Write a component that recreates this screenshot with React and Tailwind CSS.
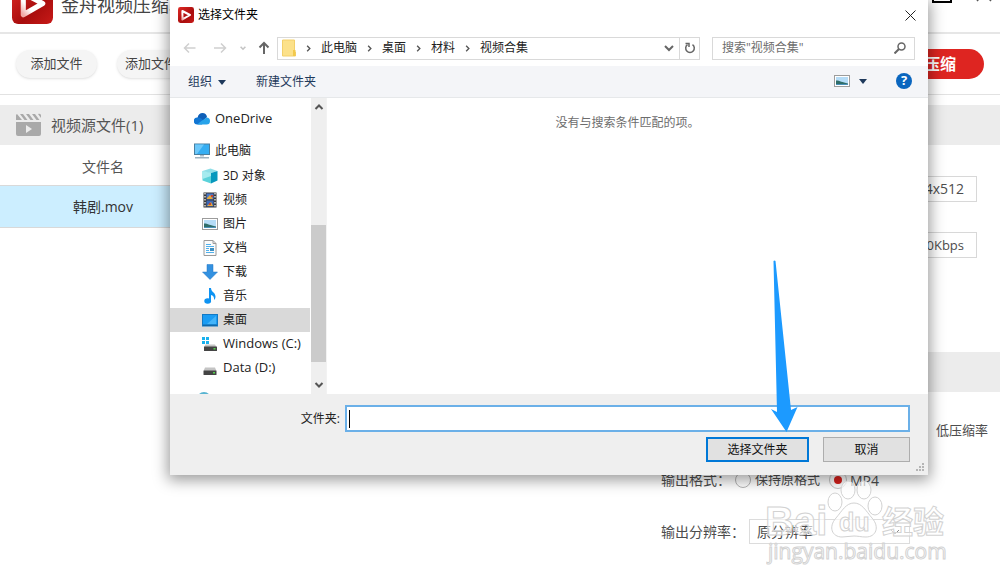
import { useState } from 'react';

const crumbs = ['此电脑', '桌面', '材料', '视频合集'];

const folders = [
  { name: '3D 对象', icon: CubeIcon },
  { name: '视频', icon: FilmIcon },
  { name: '图片', icon: PictureIcon },
  { name: '文档', icon: DocIcon },
  { name: '下载', icon: DownloadIcon },
  { name: '音乐', icon: MusicIcon },
  { name: '桌面', icon: DesktopIcon },
  { name: 'Windows (C:)', icon: WinDriveIcon, latin: true },
  { name: 'Data (D:)', icon: DriveIcon, latin: true },
];

function LogoIcon({ className }) {
  return (
    <svg viewBox="0 0 40 40" className={className}>
      <defs>
        <linearGradient id="logo" x1="0" y1="0" x2="1" y2="1">
          <stop offset="0" stopColor="#e02a26" />
          <stop offset="0.6" stopColor="#a80d0d" />
          <stop offset="1" stopColor="#c81a18" />
        </linearGradient>
        <linearGradient id="play" x1="0" y1="1" x2="0.6" y2="0.4">
          <stop offset="0" stopColor="#f0a9a6" />
          <stop offset="0.5" stopColor="#ffffff" />
        </linearGradient>
      </defs>
      <rect width="40" height="40" rx="6" fill="url(#logo)" />
      <path
        d="M11 10l19 10-19 11z"
        fill="none"
        stroke="url(#play)"
        strokeWidth="5"
        strokeLinejoin="round"
      />
    </svg>
  );
}

function ClapperIcon() {
  return (
    <svg viewBox="0 0 25 24" className="h-6 w-[25px]" fill="#a9a9a9">
      <path d="M0 7V3a2 2 0 0 1 1-2l5 6zM4 1h3l4.500 6h-3zM10 1h3l4.500 6h-3zM16 1h3l4.500 6h-3zM22 1a2 2 0 0 1 3 2v2z" />
      <path
        fillRule="evenodd"
        d="M0 9h25v12a2 2 0 0 1-2 2H2a2 2 0 0 1-2-2zM10 12v8l6-4z"
      />
    </svg>
  );
}

function CloudIcon() {
  return (
    <svg viewBox="0 0 16 16" className="h-4 w-4 shrink-0">
      <path d="M3.500 7C4 3.500 6 2 8.500 2s4 1.500 4.500 4l-5 5z" fill="#0f5fb8" />
      <path d="M3.500 13.500A3.400 3.400 0 0 1 3 6.600c3-.6 5 1.400 7 3.400l-2 3.500z" fill="#1276d3" />
      <path d="M12.500 6.500a3.500 3.500 0 0 1 0 7h-9C5 11 9.500 9 12.500 6.500z" fill="#27a3ea" />
    </svg>
  );
}

function ComputerIcon() {
  return (
    <svg viewBox="0 0 16 16" className="h-4 w-4 shrink-0">
      <rect x="0.500" y="1" width="15" height="10.500" fill="#35aef3" stroke="#4a7f9f" />
      <path d="M1 1.500h9l-7 9.500H1z" fill="#6cc8fa" />
      <path d="M6 12h4v1.500H6z" fill="#a9bcc9" />
      <path d="M1 14h14v1.500H1z" fill="#9db2c0" />
    </svg>
  );
}

function CubeIcon() {
  return (
    <svg viewBox="0 0 16 16" className="h-4 w-4 shrink-0">
      <path d="M0.500 3L8.500 0.500 15.500 3 9 5z" fill="#8fdfe8" />
      <path d="M0.500 3L9 5v10.500l-8.500-3z" fill="#5bd2da" />
      <path d="M9 5l6.500-2v9.500L9 15.500z" fill="#0798bd" />
      <path d="M0.500 3L9 5v3L0.500 11z" fill="#a5ebef" />
    </svg>
  );
}

function FilmIcon() {
  return (
    <svg viewBox="0 0 16 16" className="h-4 w-4 shrink-0">
      <rect x="1.500" y="0.500" width="13" height="15" fill="#393939" />
      <path d="M3 1v14M13 1v14" stroke="#d8d8d8" strokeWidth="1.500" strokeDasharray="1.500 1.500" />
      <rect x="4.500" y="1.500" width="7" height="6" fill="#4977c9" />
      <rect x="4.500" y="8.500" width="7" height="6" fill="#3d66b3" />
      <path d="M5 6l3-3 3 4H5zM5 14l4-4 2 4z" fill="#e5a93a" />
      <path d="M9 3h2v2H9zM7 11h2v2H7z" fill="#c9442e" />
    </svg>
  );
}

function PictureIcon() {
  return (
    <svg viewBox="0 0 16 16" className="h-4 w-4 shrink-0">
      <rect x="0.500" y="2.500" width="15" height="11" fill="#fff" stroke="#9c9c9c" />
      <rect x="2" y="4" width="12" height="8" fill="#b5dcf7" />
      <path d="M2 7.500c4 0 6 2 12 3V12H2z" fill="#2f6d6a" />
      <path d="M2 11h12v1H2z" fill="#4a90b8" />
    </svg>
  );
}

function DocIcon() {
  return (
    <svg viewBox="0 0 16 16" className="h-4 w-4 shrink-0">
      <path d="M2 0.500h9l3 3v12H2z" fill="#fbfbfb" stroke="#9a9a9a" />
      <path d="M11 0.500v3h3" fill="none" stroke="#9a9a9a" />
      <path d="M4 4.500h5M4 6.500h8M4 8.500h3M4 10.500h3M4 12.500h8" stroke="#4fb0ec" />
      <path d="M8 8h4v3H8z" fill="#3d8fc2" />
    </svg>
  );
}

function DownloadIcon() {
  return (
    <svg viewBox="0 0 16 16" className="h-4 w-4 shrink-0">
      <path d="M5 0.500h6v7.500h4.500L8 15.500 0.500 8H5z" fill="#3391e0" stroke="#2277c4" strokeWidth="0.500" />
    </svg>
  );
}

function MusicIcon() {
  return (
    <svg viewBox="0 0 16 16" className="h-4 w-4 shrink-0" fill="#0e93f2">
      <path d="M7 0h2c0 4 4.500 4.500 4.500 8.500 0 1.500-.5 2.500-1.500 3.500.5-3-1-4.500-3-5z" />
      <path d="M7 0h2v13H7z" />
      <ellipse cx="5.700" cy="13" rx="3.400" ry="2.700" />
    </svg>
  );
}

function DesktopIcon() {
  return (
    <svg viewBox="0 0 16 16" className="h-4 w-4 shrink-0">
      <rect x="0.500" y="2.500" width="15" height="11.500" fill="#1a9cf3" stroke="#1379c4" />
      <path d="M14 4L5 12h9z" fill="#44b4f9" />
      <path d="M1 12.500h14V14H1z" fill="#1268a8" />
    </svg>
  );
}

function DriveIcon() {
  return (
    <svg viewBox="0 0 16 16" className="h-4 w-4 shrink-0">
      <path d="M3 7.500h10l1.500 3.500h-13z" fill="#c4c4c4" />
      <rect x="1.500" y="10.500" width="13" height="4.500" rx="0.500" fill="#444" />
      <rect x="11" y="12" width="2" height="1.500" fill="#53d34b" />
    </svg>
  );
}

function WinDriveIcon() {
  return (
    <svg viewBox="0 0 16 16" className="h-4 w-4 shrink-0">
      <path d="M0 1h3v3H0zM4 1h3v3H4zM0 5h3v3H0zM4 5h3v3H4z" fill="#19b1ee" />
      <path d="M3.500 8.500H13l1.500 2.500H2z" fill="#c4c4c4" />
      <rect x="2" y="10.500" width="13" height="4.500" rx="0.500" fill="#444" />
      <rect x="11.500" y="12" width="2" height="1.500" fill="#53d34b" />
    </svg>
  );
}

function FolderIcon() {
  return (
    <svg viewBox="0 0 14 18" className="h-[18px] w-[14px] shrink-0">
      <path d="M0.500 1h12v12h1v4H0.500z" fill="#fce18a" stroke="#f3d06b" />
      <path d="M11 11h2.500v6H11z" fill="#f2c94c" />
    </svg>
  );
}

function Chevron({ d, className }) {
  return (
    <svg viewBox="0 0 10 10" className={className} fill="none" stroke="currentColor">
      <path d={d} />
    </svg>
  );
}

function NavArrow({ d, className }) {
  return (
    <svg viewBox="0 0 14 14" className={className} fill="none" stroke="currentColor">
      <path d={d} />
    </svg>
  );
}

function AppHeader() {
  return (
    <header className="flex h-[34px] items-end overflow-hidden border-b-2 border-[#e6e6e6] pr-2 pl-3">
      <LogoIcon className="mb-2 h-[41px] w-[41px] shrink-0" />
      <h1 className="mb-[15px] ml-2 text-[18px] leading-6 text-[#444]">金舟视频压缩软件</h1>
      <div className="mb-[29px] ml-auto flex items-end gap-6">
        <button aria-label="最大化" className="h-4 w-5 border-2 border-black" />
        <button aria-label="关闭" className="mb-px text-[#555]">
          <svg viewBox="0 0 16 16" className="h-4 w-4" fill="none" stroke="currentColor" strokeWidth="1.500">
            <path d="M1 0l14 15M15 0L1 15" />
          </svg>
        </button>
      </div>
    </header>
  );
}

function AppToolbar() {
  return (
    <div className="flex h-[61px] items-center gap-5 border-b border-[#e2e2e2] px-4">
      <button className="h-7 w-[81px] rounded-full bg-[#f5f5f5] pb-px text-[13px] text-[#444] shadow-sm">
        添加文件
      </button>
      <button className="h-7 w-[81px] rounded-full bg-[#f5f5f5] pb-px text-[13px] text-[#444] shadow-sm">
        添加文件夹
      </button>
      <button className="ml-auto h-[30px] w-[120px] rounded-full bg-[#de2521] text-[16px] font-bold text-white">
        开始压缩
      </button>
    </div>
  );
}

function SourceList() {
  return (
    <section className="min-w-0 flex-1">
      <div className="flex h-10 items-center gap-[10px] bg-[#ececec] px-4">
        <ClapperIcon />
        <h2 className="text-[15px] text-[#555]">视频源文件(1)</h2>
      </div>
      <table className="w-full table-fixed text-[14px]">
        <thead>
          <tr className="h-10 text-[#555]">
            <th className="w-[206px] pt-[3px] font-normal">文件名</th>
            <th />
          </tr>
        </thead>
        <tbody>
          <tr className="h-[42px] border-y border-[#d9d9d9] bg-[#cceeff] text-[#333]">
            <td className="text-center">韩剧.mov</td>
            <td />
          </tr>
        </tbody>
      </table>
    </section>
  );
}

function Radio({ name, label, checked, onChange, className }) {
  return (
    <label className={`flex items-center ${className}`}>
      <input
        type="radio"
        name={name}
        checked={checked}
        onChange={onChange}
        className="h-4 w-4 shrink-0 appearance-none rounded-full border border-[#b5b5b5] bg-white checked:border-4 checked:border-white checked:bg-[#d8201c] checked:outline checked:outline-[#c4c4c4]"
      />
      <span>{label}</span>
    </label>
  );
}

function Settings() {
  const [format, setFormat] = useState('mp4');
  const [rate, setRate] = useState('');

  return (
    <section className="w-[360px] shrink-0 text-[#4d4d4d]">
      <div className="h-10 bg-[#ececec]" />
      <div className="flex flex-col items-end gap-[30px] pt-[31px] pr-[23px]">
        <input
          aria-label="分辨率"
          readOnly
          value="1024x512"
          className="h-[26px] w-[110px] border border-[#d8d8d8] px-3 pb-px text-right text-[14px]"
        />
        <input
          aria-label="比特率"
          readOnly
          value="1000Kbps"
          className="h-[26px] w-[110px] border border-[#d8d8d8] px-3 text-right text-[13px]"
        />
      </div>
      <div className="mt-[94px] h-10 bg-[#ececec]" />
      <div className="flex h-[78px] items-center justify-end pr-3">
        <Radio
          name="rate"
          label="低压缩率"
          className="gap-2 text-[13px]"
          checked={rate === 'low'}
          onChange={() => setRate('low')}
        />
      </div>
      <div className="flex h-5 items-center pl-[21px]">
        <span className="w-[74px] pb-px text-[14px]">输出格式：</span>
        <div className="flex gap-[10px]">
          <Radio
            name="format"
            label="保持原格式"
            className="gap-1 text-[13px]"
            checked={format === 'keep'}
            onChange={() => setFormat('keep')}
          />
          <Radio
            name="format"
            label="MP4"
            className="gap-1 text-[14px]"
            checked={format === 'mp4'}
            onChange={() => setFormat('mp4')}
          />
        </div>
      </div>
      <div className="mt-[29px] flex items-center pl-[21px]">
        <label htmlFor="resolution" className="w-[88px] pb-px text-[14px]">
          输出分辨率：
        </label>
        <div className="grid w-[161px] items-center">
          <select
            id="resolution"
            className="col-start-1 row-start-1 h-[25px] w-full appearance-none border border-[#dcdcdc] pl-[7px] text-[14px]"
          >
            <option>原分辨率</option>
          </select>
          <Chevron d="M1 3l4 4 4-4" className="col-start-1 row-start-1 mr-[10px] h-[10px] w-[10px] justify-self-end text-[#888]" />
        </div>
      </div>
    </section>
  );
}

function AddressBar() {
  return (
    <div className="flex h-9 items-center px-[13px]">
      <button aria-label="后退" className="text-[#cfcfcf]">
        <NavArrow d="M12.500 7H1.500M6 2.500L1.500 7 6 11.500" className="h-[14px] w-[14px] stroke-[1.5]" />
      </button>
      <button aria-label="前进" className="ml-4 text-[#cfcfcf]">
        <NavArrow d="M1 7h11.500M8 2.500L12.500 7 8 11.500" className="h-[14px] w-[14px] stroke-[1.5]" />
      </button>
      <button aria-label="最近" className="ml-3 text-[#c4c4c4]">
        <Chevron d="M2 3.500l3 3 3-3" className="h-2 w-2 stroke-2" />
      </button>
      <button aria-label="向上" className="ml-[10px] text-[#666]">
        <NavArrow d="M7 13V2M2.500 6.500L7 2l4.500 4.500" className="h-[14px] w-[14px] stroke-2" />
      </button>
      <div className="ml-[6px] flex h-[23px] flex-1 items-center border border-[#d9d9d9] pl-1 text-[12px] text-[#222]">
        <FolderIcon />
        {crumbs.map((name) => (
          <span key={name} className="flex items-center">
            <Chevron d="M3.500 2L6.500 5 3.500 8" className="mx-2 h-[9px] w-[9px] stroke-[1.5] text-[#555]" />
            <button className="pb-px">{name}</button>
          </span>
        ))}
        <button aria-label="展开" className="mr-[5px] ml-auto text-[#666]">
          <Chevron d="M1 3l4 4 4-4" className="h-[10px] w-[10px] stroke-2" />
        </button>
        <button aria-label="刷新" className="flex h-full w-5 items-center justify-center border-l border-[#d9d9d9] text-[#666]">
          <svg viewBox="0 0 12 12" className="h-3 w-3" fill="none" stroke="currentColor" strokeWidth="1.500">
            <path d="M8.500 2.600A4.300 4.300 0 1 1 3.500 2.600" />
            <path d="M1.500 1.500h3.500v3.500" />
          </svg>
        </button>
      </div>
      <div className="ml-3 flex h-[23px] w-[203px] items-center border border-[#d9d9d9] pr-2 pl-[9px] text-[#666]">
        <input
          type="search"
          aria-label="搜索"
          placeholder='搜索"视频合集"'
          className="min-w-0 flex-1 text-[12px] placeholder:text-[#6d6d6d]"
        />
        <svg viewBox="0 0 12 12" className="h-3 w-3" fill="none" stroke="currentColor" strokeWidth="1.500">
          <circle cx="7.500" cy="4.500" r="3.500" />
          <path d="M5 7L0.500 11.500" strokeWidth="2" />
        </svg>
      </div>
    </div>
  );
}

function CommandBar() {
  return (
    <div className="flex h-8 items-center border-b border-[#e6e8ea] bg-[#f4f5f8] pr-4 pb-px pl-[18px] text-[12px] text-[#1e395b]">
      <button className="flex items-center gap-[6px] pt-[2px]">
        组织
        <svg viewBox="0 0 8 5" className="h-[5px] w-2" fill="currentColor">
          <path d="M0 0h8L4 5z" />
        </svg>
      </button>
      <button className="ml-[30px] pt-[2px]">新建文件夹</button>
      <button aria-label="视图" className="ml-auto flex items-center gap-[9px]">
        <PictureIcon />
        <svg viewBox="0 0 8 5" className="h-[5px] w-2" fill="currentColor">
          <path d="M0 0h8L4 5z" />
        </svg>
      </button>
      <button
        aria-label="帮助"
        className="ml-[29px] flex h-4 w-4 items-center justify-center rounded-full bg-[#0a66bf] text-[13px] font-bold text-white"
      >
        ?
      </button>
    </div>
  );
}

function FolderTree() {
  return (
    <nav className="h-full w-[140px] overflow-hidden text-[12px] text-[#222]">
      <button className="mt-[9px] flex h-6 w-full items-center gap-[5px] pl-6 text-[13px]">
        <CloudIcon />
        OneDrive
      </button>
      <button className="mt-2 flex h-6 w-full items-center gap-[5px] pl-6">
        <ComputerIcon />
        此电脑
      </button>
      <ul className="mt-px">
        {folders.map(({ name, icon: Icon, latin }) => (
          <li key={name}>
            <button
              className={`flex h-6 w-full items-center gap-[5px] pl-8 whitespace-nowrap ${
                name === '桌面' ? 'bg-[#d9d9d9]' : ''
              } ${latin ? 'text-[13px]' : ''}`}
            >
              <Icon />
              {name}
            </button>
          </li>
        ))}
      </ul>
      <svg viewBox="0 0 16 16" className="mt-[10px] ml-[26px] h-4 w-4">
        <circle cx="8" cy="9" r="7" fill="#58b4d1" />
      </svg>
    </nav>
  );
}

function ScrollBar() {
  return (
    <div className="ml-px flex w-[15px] flex-col items-center bg-[#efefef] text-[#555]">
      <button aria-label="向上滚动" className="flex h-[18px] items-center">
        <Chevron d="M1.500 7L5 3.500 8.500 7" className="h-[10px] w-[10px] stroke-2" />
      </button>
      <div className="mt-[109px] h-[137px] w-full bg-[#cbcbcb]" />
      <button aria-label="向下滚动" className="mt-auto flex h-[18px] items-center">
        <Chevron d="M1.500 3L5 6.500 8.500 3" className="h-[10px] w-[10px] stroke-2" />
      </button>
    </div>
  );
}

function FolderDialog() {
  return (
    <div
      role="dialog"
      aria-label="选择文件夹"
      className="absolute top-0 right-[72px] left-[170px] bg-white shadow-[0_3px_14px_2px_rgba(0,0,0,0.4)]"
    >
      <div className="flex h-[30px] items-center pr-3 pl-2">
        <LogoIcon className="h-4 w-4" />
        <span className="ml-1 text-[12px] text-black">选择文件夹</span>
        <button aria-label="关闭" className="ml-auto text-[#222]">
          <svg viewBox="0 0 11 11" className="h-[11px] w-[11px]" fill="none" stroke="currentColor">
            <path d="M0.500 0.500l10 10M10.500 0.500l-10 10" />
          </svg>
        </button>
      </div>
      <AddressBar />
      <CommandBar />
      <div className="flex h-[296px]">
        <FolderTree />
        <ScrollBar />
        <p className="flex-1 border-l border-[#f2f2f2] pt-[17px] text-center text-[12px] leading-4 text-[#6d6d6d]">
          没有与搜索条件匹配的项。
        </p>
      </div>
      <div className="bg-[#efefef] pt-[11px] pr-[18px] pb-[13px]">
        <div className="flex items-center">
          <label htmlFor="folder" className="w-[175px] pr-[5px] text-right text-[12px] text-[#222]">
            文件夹:
          </label>
          <div className="flex h-[27px] flex-1 items-center border-2 border-[#6bb0e8] bg-white pl-[2px]">
            <span className="h-[18px] w-px bg-black" />
            <input id="folder" type="text" className="min-w-0 flex-1 text-[12px] outline-none" />
          </div>
        </div>
        <div className="mt-[5px] flex justify-end gap-[14px] text-[12px] text-[#111]">
          <button className="h-[25px] w-[103px] border-2 border-[#0078d7] bg-[#e1e1e1]">选择文件夹</button>
          <button className="h-[25px] w-[87px] border border-[#adadad] bg-[#e1e1e1]">取消</button>
        </div>
      </div>
      <svg viewBox="0 0 10 10" className="absolute right-[3px] bottom-[3px] h-[10px] w-[10px]" fill="#b5b5b5">
        <path d="M7 1h2v2H7zM4 4h2v2H4zM7 4h2v2H7zM1 7h2v2H1zM4 7h2v2H4zM7 7h2v2H7z" />
      </svg>
      <svg viewBox="0 0 28 172" className="absolute right-[130px] bottom-[43px] h-[172px] w-7" fill="#1c9aff">
        <path d="M3.500 1q1-1 2 0l15.500 149 6.500-3-11 25L1 149l6 3z" />
      </svg>
    </div>
  );
}

function Watermark() {
  return (
    <svg
      viewBox="0 0 182 88"
      className="pointer-events-none absolute top-[480px] right-[52px] h-[88px] w-[182px]"
      fill="#ffffff"
      fillOpacity="0.65"
      stroke="#d2d2d2"
      strokeWidth="1"
      fontFamily="'Liberation Sans', 'Noto Sans CJK SC', sans-serif"
    >
      <ellipse cx="69" cy="22" rx="7" ry="9" />
      <ellipse cx="82" cy="10" rx="7" ry="9" />
      <ellipse cx="98" cy="10" rx="7" ry="9" />
      <ellipse cx="109" cy="26" rx="7" ry="9" />
      <path d="M88 23c8 0 12 8 18 15 8 9 4 19-6 19-5 0-8-1-12-1s-8 1-12 1c-10 0-14-10-6-19 6-7 10-15 18-15z" />
      <text x="-1" y="55" fontSize="40" fontWeight="bold">Bai</text>
      <text x="73" y="51" fontSize="25" fontWeight="bold">du</text>
      <text x="116" y="53" fontSize="31" fontWeight="bold">经验</text>
      <text x="2" y="79" fontSize="21" fontFamily="'Open Sans', 'Noto Sans', sans-serif">jingyan.baidu.com</text>
    </svg>
  );
}

export default function App() {
  return (
    <div className="relative min-h-screen overflow-hidden bg-white font-['Open_Sans','Noto_Sans_CJK_SC',sans-serif]">
      <AppHeader />
      <AppToolbar />
      <main className="flex pt-[10px]">
        <SourceList />
        <Settings />
      </main>
      <FolderDialog />
      <Watermark />
    </div>
  );
}
